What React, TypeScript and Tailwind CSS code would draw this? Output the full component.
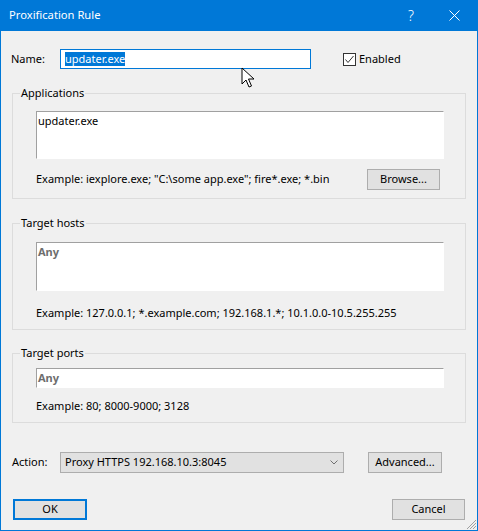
import React from "react";

const font = { fontFamily: '"Noto Sans", "Segoe UI", Arial, sans-serif' };

function Group({ title, children, className }: { title: string; children: React.ReactNode; className?: string }) {
  return (
    <fieldset className={"mx-[11px] border border-[#dcdcdc] " + (className ?? "")}>
      <legend className="ml-[7px] px-[1px] leading-[16px] text-[#000]">{title}</legend>
      {children}
    </fieldset>
  );
}

function SunkenBox({ children, className }: { children?: React.ReactNode; className?: string }) {
  return (
    <div
      className={
        "ml-[23px] w-[408px] bg-white border border-t-[#a0a0a0] border-l-[#a0a0a0] border-r-white border-b-white pl-[1px] " +
        (className ?? "")
      }
    >
      {children}
    </div>
  );
}

function Button({ label, className }: { label: string; className?: string }) {
  return (
    <div
      className={
        "h-[21px] flex items-center justify-center bg-[#e1e1e1] border border-[#adadad] text-black " + (className ?? "")
      }
    >
      {label}
    </div>
  );
}

function Cursor() {
  return (
    <svg className="absolute left-[240px] top-[67px]" width="14" height="22" viewBox="0 0 14 22">
      <path
        d="M1 1 L1 17 L5 13 L8 20 L10.5 19 L7.5 12 L13 12 Z"
        fill="white"
        stroke="black"
        strokeWidth="1"
        strokeLinejoin="miter"
      />
    </svg>
  );
}

export default function App() {
  return (
    <div
      className="relative w-[478px] h-[531px] bg-[#f0f0f0] border-x border-b border-[#0078d7] text-[11px] text-black flex flex-col overflow-hidden"
      style={font}
    >
      {/* title bar */}
      <div className="h-[31px] -mx-px bg-[#0078d7] text-white flex items-center pl-[9px] shrink-0">
        <span className="text-[11.2px]">Proxification Rule</span>
        <span className="ml-auto text-[14px] font-light mr-[35px]">?</span>
        <svg width="11" height="11" viewBox="0 0 11 11" className="mr-[18px]">
          <path d="M0.5 0.5 L10.5 10.5 M10.5 0.5 L0.5 10.5" stroke="white" strokeWidth="1" />
        </svg>
      </div>

      {/* name row */}
      <div className="mt-[18px] h-[20px] flex items-center pl-[10px]">
        <span className="w-[49px]">Name:</span>
        <div className="w-[251px] h-[20px] bg-white border border-[#0078d7] flex items-center pl-[4px]">
          <span className="bg-[#0078d7] text-white leading-[14px]">updater.exe</span>
        </div>
        <div className="ml-[32px] flex items-center gap-[3px]">
          <div className="w-[13px] h-[13px] bg-white border border-[#333] flex items-center justify-center">
            <svg width="11" height="11" viewBox="0 0 11 11">
              <path d="M1.5 5.5 L4 8.5 L9.5 2" fill="none" stroke="#333" strokeWidth="1" />
            </svg>
          </div>
          <span>Enabled</span>
        </div>
      </div>

      {/* applications */}
      <Group title="Applications" className="mt-[16px] pb-[8px]">
        <SunkenBox className="mt-[10px] h-[48px] leading-[16px] pt-[1px]">updater.exe</SunkenBox>
        <div className="mt-[10px] h-[21px] flex items-center pl-[23px]">
          <span>Example: iexplore.exe; "C:\some app.exe"; fire*.exe; *.bin</span>
          <Button label="Browse..." className="ml-auto mr-[25px] w-[73px]" />
        </div>
      </Group>

      {/* target hosts */}
      <Group title="Target hosts" className="mt-[16px] pb-[8px]">
        <SunkenBox className="mt-[11px] h-[49px] leading-[16px] pt-[1px]">
          <span className="font-bold text-[#6d6d6d]">Any</span>
        </SunkenBox>
        <div className="mt-[14px] h-[16px] flex items-center pl-[23px]">
          <span>Example: 127.0.0.1; *.example.com; 192.168.1.*; 10.1.0.0-10.5.255.255</span>
        </div>
      </Group>

      {/* target ports */}
      <Group title="Target ports" className="mt-[15px] pb-[8px]">
        <SunkenBox className="mt-[7px] h-[20px] leading-[16px] pt-[1px]">
          <span className="font-bold text-[#6d6d6d]">Any</span>
        </SunkenBox>
        <div className="mt-[10px] h-[16px] flex items-center pl-[23px]">
          <span>Example: 80; 8000-9000; 3128</span>
        </div>
      </Group>

      {/* action row */}
      <div className="mt-[29px] h-[21px] flex items-center pl-[11px]">
        <span className="w-[48px]">Action:</span>
        <div className="w-[284px] h-[21px] bg-[#e1e1e1] border border-[#adadad] flex items-center pl-[4px] pr-[5px]">
          <span>Proxy HTTPS 192.168.10.3:8045</span>
          <svg width="8" height="5" viewBox="0 0 8 5" className="ml-auto">
            <path d="M0.5 0.5 L4 4 L7.5 0.5" fill="none" stroke="#707070" strokeWidth="1" />
          </svg>
        </div>
        <Button label="Advanced..." className="ml-[24px] w-[74px]" />
      </div>

      {/* buttons */}
      <div className="mt-[26px] flex items-center pl-[12px] pr-[12px]">
        <div className="w-[74px] h-[21px] flex items-center justify-center bg-[#e1e1e1] border-2 border-[#0078d7]">
          OK
        </div>
        <Button label="Cancel" className="ml-auto w-[73px]" />
      </div>

      {/* size grip */}
      <svg className="absolute right-0 bottom-0" width="12" height="12" viewBox="0 0 12 12">
        <path d="M11 2 L2 11 M11 5 L5 11 M11 8 L8 11" stroke="#a0a0a0" strokeWidth="1" />
      </svg>

      <Cursor />
    </div>
  );
}
